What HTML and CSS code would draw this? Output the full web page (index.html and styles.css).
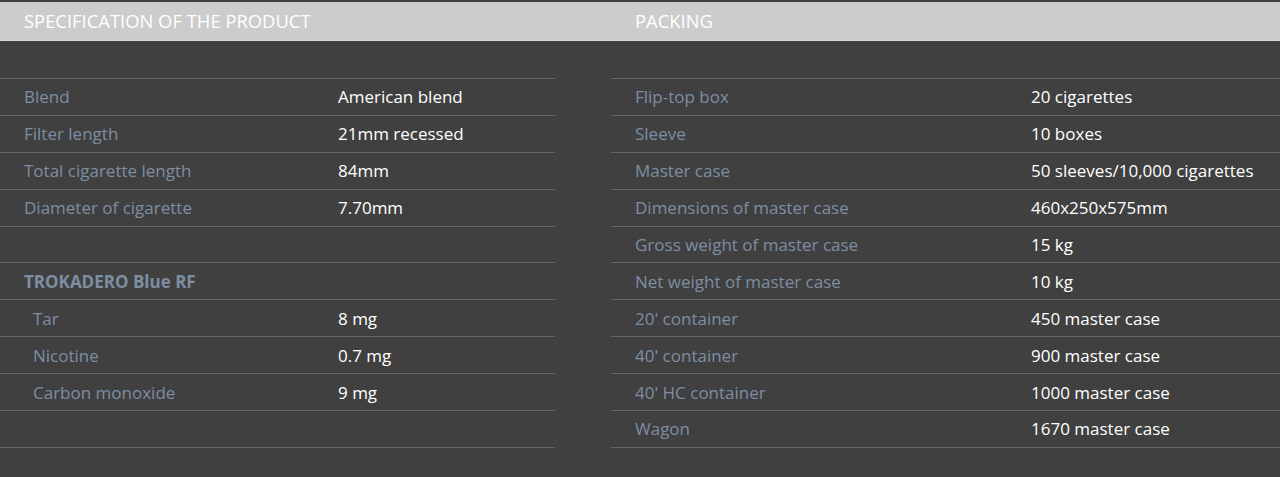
FILE: index.html
```html
<!DOCTYPE html>
<html lang="en">
<head>
<meta charset="utf-8">
<title>Specification</title>
<link rel="stylesheet" href="styles.css">
</head>
<body>
<div class="page">
  <div class="head">
    <div class="head-cell">SPECIFICATION OF THE PRODUCT</div>
    <div class="head-cell head-right">PACKING</div>
  </div>
  <div class="cols">
    <div class="table left">
      <div class="row"><span class="lbl">Blend</span><span class="val">American blend</span></div>
      <div class="row"><span class="lbl">Filter length</span><span class="val">21mm recessed</span></div>
      <div class="row"><span class="lbl">Total cigarette length</span><span class="val">84mm</span></div>
      <div class="row"><span class="lbl">Diameter of cigarette</span><span class="val">7.70mm</span></div>
      <div class="row"></div>
      <div class="row"><span class="lbl strong">TROKADERO Blue RF</span></div>
      <div class="row"><span class="lbl sub">Tar</span><span class="val">8 mg</span></div>
      <div class="row"><span class="lbl sub">Nicotine</span><span class="val">0.7 mg</span></div>
      <div class="row"><span class="lbl sub">Carbon monoxide</span><span class="val">9 mg</span></div>
      <div class="row"></div>
    </div>
    <div class="table right">
      <div class="row"><span class="lbl">Flip-top box</span><span class="val">20 cigarettes</span></div>
      <div class="row"><span class="lbl">Sleeve</span><span class="val">10 boxes</span></div>
      <div class="row"><span class="lbl">Master case</span><span class="val">50 sleeves/10,000 cigarettes</span></div>
      <div class="row"><span class="lbl">Dimensions of master case</span><span class="val">460x250x575mm</span></div>
      <div class="row"><span class="lbl">Gross weight of master case</span><span class="val">15 kg</span></div>
      <div class="row"><span class="lbl">Net weight of master case</span><span class="val">10 kg</span></div>
      <div class="row"><span class="lbl">20' container</span><span class="val">450 master case</span></div>
      <div class="row"><span class="lbl">40' container</span><span class="val">900 master case</span></div>
      <div class="row"><span class="lbl">40' HC container</span><span class="val">1000 master case</span></div>
      <div class="row"><span class="lbl">Wagon</span><span class="val">1670 master case</span></div>
    </div>
  </div>
</div>
</body>
</html>
```
FILE: styles.css
```css
html, body {
  margin: 0;
  padding: 0;
  background: #404040;
}
body {
  font-family: "Open Sans", "Liberation Sans", sans-serif;
  font-size: 17px;
  color: #ffffff;
}
.page {
  padding-top: 2px;
  height: 475px;
}
.head {
  display: grid;
  grid-template-columns: 611px 1fr;
  background: #cccccc;
  height: 38px;
  border-bottom: 1px solid #dcdcdc;
  align-items: center;
}
.head-cell {
  padding-left: 24px;
  font-size: 18.4px;
  color: #ffffff;
  line-height: 38px;
}
.cols {
  display: grid;
  grid-template-columns: 555px 1fr;
  column-gap: 56px;
  padding-top: 37px;
}
.table {
  border-bottom: 1px solid #646464;
}
.row {
  display: grid;
  align-items: center;
  height: 36.9px;
  box-sizing: border-box;
  border-top: 1px solid #646464;
  padding-left: 24px;
}
.left .row {
  grid-template-columns: 314px 1fr;
}
.right .row {
  grid-template-columns: 396px 1fr;
}
.lbl {
  color: #7d8ea2;
}
.lbl.strong {
  font-weight: 700;
  font-size: 17px;
}
.lbl.sub {
  padding-left: 9px;
}
.val {
  color: #ffffff;
}
```
